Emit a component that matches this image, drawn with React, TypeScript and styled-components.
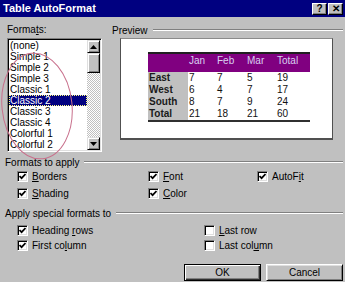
import React from "react";
import styled, { createGlobalStyle } from "styled-components";

const Global = createGlobalStyle`
  html, body { margin: 0; padding: 0; background: #c0c0c0; }
  body {
    font-family: "Liberation Sans", Arial, sans-serif;
    font-size: 10px;
    color: #000;
  }
`;

const Window = styled.div`
  position: relative;
  width: 345px;
  height: 282px;
  overflow: hidden;
  background: #c0c0c0;
  display: flex;
  flex-direction: column;
`;

const TitleBar = styled.div`
  height: 17px;
  flex: none;
  background: #000080;
  display: flex;
  align-items: center;
  justify-content: space-between;
  padding: 0 2px 0 3px;
`;

const Title = styled.span`
  color: #fff;
  font-weight: bold;
  font-size: 11px;
  line-height: 17px;
  white-space: nowrap;
`;

const CaptionButtons = styled.div`
  display: flex;
  gap: 1px;
`;

const CaptionButton = styled.div`
  width: 15px;
  height: 12px;
  box-sizing: border-box;
  background: #c0c0c0;
  border-top: 1px solid #fff;
  border-left: 1px solid #fff;
  border-right: 1px solid #000;
  border-bottom: 1px solid #000;
  box-shadow: inset -1px -1px #808080;
  display: flex;
  align-items: center;
  justify-content: center;
  font-weight: bold;
  font-size: 10px;
  line-height: 1;
`;

const TopSection = styled.div`
  display: grid;
  grid-template-columns: 95px 231px;
  column-gap: 10px;
  margin: 7px 0 0 7px;
`;

const Column = styled.div`
  display: flex;
  flex-direction: column;
`;

const FieldLabel = styled.div`
  height: 12px;
  line-height: 12px;
  white-space: nowrap;
`;

const Key = styled.span`
  text-decoration: underline;
`;

const ListBox = styled.div`
  margin-top: 2px;
  height: 114px;
  box-sizing: border-box;
  border-top: 1px solid #808080;
  border-left: 1px solid #808080;
  border-right: 1px solid #fff;
  border-bottom: 1px solid #fff;
  box-shadow: inset 1px 1px #000, inset -1px -1px #dfdfdf;
  background: #fff;
  padding: 1px;
  display: flex;
`;

const Items = styled.div`
  flex: 1;
  overflow: hidden;
  display: flex;
  flex-direction: column;
`;

const Item = styled.div<{ $selected?: boolean }>`
  height: 11px;
  flex: none;
  line-height: 11px;
  padding-left: 1px;
  white-space: nowrap;
  background: ${(p) => (p.$selected ? "#000080" : "transparent")};
  color: ${(p) => (p.$selected ? "#fff" : "#000")};
  outline: ${(p) => (p.$selected ? "1px dotted #ffff80" : "none")};
  outline-offset: -1px;
`;

const ScrollBar = styled.div`
  width: 13px;
  flex: none;
  display: flex;
  flex-direction: column;
  background: repeating-conic-gradient(#c0c0c0 0% 25%, #fff 0% 50%) 0 0 / 2px 2px;
`;

const ScrollPart = styled.div<{ $h: number }>`
  height: ${(p) => p.$h}px;
  flex: none;
  box-sizing: border-box;
  background: #c0c0c0;
  border-top: 1px solid #dfdfdf;
  border-left: 1px solid #dfdfdf;
  border-right: 1px solid #000;
  border-bottom: 1px solid #000;
  box-shadow: inset 1px 1px #fff, inset -1px -1px #808080;
  display: flex;
  align-items: center;
  justify-content: center;
`;

const Track = styled.div`
  flex: 1;
`;

const PreviewHeader = styled.div`
  display: flex;
  align-items: center;
  gap: 5px;
  height: 12px;
`;

const EtchedLine = styled.div`
  flex: 1;
  height: 0;
  border-top: 1px solid #808080;
  border-bottom: 1px solid #fff;
`;

const PreviewBox = styled.div`
  margin: 2px 0 0 8px;
  width: 213px;
  height: 102px;
  box-sizing: border-box;
  background: #fff;
  border: 1px solid #505050;
  border-top-color: #8a8a8a;
  border-bottom-width: 2px;
  padding: 13px 0 0 27px;
`;

const SampleTable = styled.div`
  width: 162px;
  display: grid;
  grid-template-columns: 40px 28px 30px 30px 34px;
  grid-template-rows: 18px repeat(4, 12px);
  border-top: 2px solid #202020;
  border-bottom: 2px solid #303030;
`;

type CellKind = "head" | "label" | "data";

const Cell = styled.div<{ $kind: CellKind }>`
  line-height: 12px;
  padding: ${(p) => (p.$kind === "head" ? "1px 0 0 1px" : "0 0 0 1px")};
  white-space: nowrap;
  background: ${(p) =>
    p.$kind === "head" ? "#800080" : p.$kind === "label" ? "#c0c0c0" : "#fff"};
  color: ${(p) =>
    p.$kind === "head" ? "#d8d0f0" : p.$kind === "label" ? "#1a1a1a" : "#111"};
  font-weight: ${(p) => (p.$kind === "label" ? "bold" : "normal")};
`;

const GroupHeader = styled.div<{ $top: number }>`
  display: flex;
  align-items: center;
  gap: 5px;
  height: 12px;
  margin-top: ${(p) => p.$top}px;
  padding: 0 2px 0 5px;
  white-space: nowrap;
`;

const CheckGrid = styled.div<{ $cols: string; $row: number; $top: number }>`
  display: grid;
  grid-template-columns: ${(p) => p.$cols};
  grid-auto-rows: ${(p) => p.$row}px;
  margin: ${(p) => p.$top}px 0 0 17px;
`;

const CheckItem = styled.div`
  display: flex;
  align-items: center;
  gap: 4px;
  white-space: nowrap;
`;

const Box = styled.span`
  width: 11px;
  height: 11px;
  box-sizing: border-box;
  flex: none;
  background: #fff;
  border-top: 1px solid #808080;
  border-left: 1px solid #808080;
  border-right: 1px solid #fff;
  border-bottom: 1px solid #fff;
  box-shadow: inset 1px 1px #000, inset -1px -1px #dfdfdf;
  display: flex;
  align-items: center;
  justify-content: center;
`;

const ButtonRow = styled.div`
  display: flex;
  justify-content: flex-end;
  gap: 5px;
  margin-top: 11px;
  padding-right: 2px;
`;

const Button = styled.div<{ $default?: boolean }>`
  width: 77px;
  height: 17px;
  box-sizing: border-box;
  background: #c0c0c0;
  display: flex;
  align-items: center;
  justify-content: center;
  font-size: 10px;
  ${(p) =>
    p.$default
      ? `border: 1px solid #000;
         box-shadow: inset 1px 1px #fff, inset -1px -1px #303030, inset -2px -2px #808080;`
      : `border-top: 1px solid #fff; border-left: 1px solid #fff;
         border-right: 1px solid #000; border-bottom: 1px solid #000;
         box-shadow: inset 1px 1px #dfdfdf, inset -1px -1px #808080;`}
`;

const Annotation = styled.svg`
  position: absolute;
  left: 0;
  top: 0;
  pointer-events: none;
`;

const Check = ({ on }: { on: boolean }) => (
  <Box>
    {on && (
      <svg width="7" height="7" viewBox="0 0 7 7">
        <path d="M0.5 3 L2.6 5.2 L6.5 1" fill="none" stroke="#000" strokeWidth="1.7" />
      </svg>
    )}
  </Box>
);

const Arrow = ({ up }: { up: boolean }) => (
  <svg width="7" height="4" viewBox="0 0 7 4">
    <path d={up ? "M3.5 0 L7 4 L0 4 Z" : "M0 0 L7 0 L3.5 4 Z"} fill="#000" />
  </svg>
);

const formats = [
  "(none)",
  "Simple 1",
  "Simple 2",
  "Simple 3",
  "Classic 1",
  "Classic 2",
  "Classic 3",
  "Classic 4",
  "Colorful 1",
  "Colorful 2",
];

const rows: [string, number[]][] = [
  ["East", [7, 7, 5, 19]],
  ["West", [6, 4, 7, 17]],
  ["South", [8, 7, 9, 24]],
  ["Total", [21, 18, 21, 60]],
];

export default function App() {
  return (
    <>
      <Global />
      <Window>
        <TitleBar>
          <Title>Table AutoFormat</Title>
          <CaptionButtons>
            <CaptionButton>?</CaptionButton>
            <CaptionButton>✕</CaptionButton>
          </CaptionButtons>
        </TitleBar>

        <TopSection>
          <Column>
            <FieldLabel>
              Forma<Key>t</Key>s:
            </FieldLabel>
            <ListBox>
              <Items>
                {formats.map((f) => (
                  <Item key={f} $selected={f === "Classic 2"}>
                    {f}
                  </Item>
                ))}
              </Items>
              <ScrollBar>
                <ScrollPart $h={13}>
                  <Arrow up />
                </ScrollPart>
                <ScrollPart $h={20} />
                <Track />
                <ScrollPart $h={13}>
                  <Arrow up={false} />
                </ScrollPart>
              </ScrollBar>
            </ListBox>
          </Column>
          <Column>
            <PreviewHeader>
              <span>Preview</span>
              <EtchedLine />
            </PreviewHeader>
            <PreviewBox>
              <SampleTable>
                <Cell $kind="head" />
                {["Jan", "Feb", "Mar", "Total"].map((h) => (
                  <Cell key={h} $kind="head">
                    {h}
                  </Cell>
                ))}
                {rows.map(([name, vals]) => (
                  <React.Fragment key={name}>
                    <Cell $kind="label">{name}</Cell>
                    {vals.map((v, i) => (
                      <Cell key={i} $kind="data">
                        {v}
                      </Cell>
                    ))}
                  </React.Fragment>
                ))}
              </SampleTable>
            </PreviewBox>
          </Column>
        </TopSection>

        <GroupHeader $top={4}>
          <span>Formats to apply</span>
          <EtchedLine />
        </GroupHeader>
        <CheckGrid $cols="131px 109px 1fr" $row={17} $top={0}>
          <CheckItem>
            <Check on />
            <span>
              <Key>B</Key>orders
            </span>
          </CheckItem>
          <CheckItem>
            <Check on />
            <span>
              <Key>F</Key>ont
            </span>
          </CheckItem>
          <CheckItem>
            <Check on />
            <span>
              AutoF<Key>i</Key>t
            </span>
          </CheckItem>
          <CheckItem>
            <Check on />
            <span>
              <Key>S</Key>hading
            </span>
          </CheckItem>
          <CheckItem>
            <Check on />
            <span>
              <Key>C</Key>olor
            </span>
          </CheckItem>
        </CheckGrid>

        <GroupHeader $top={5}>
          <span>Apply special formats to</span>
          <EtchedLine />
        </GroupHeader>
        <CheckGrid $cols="187px 1fr" $row={15} $top={4}>
          <CheckItem>
            <Check on />
            <span>
              Heading <Key>r</Key>ows
            </span>
          </CheckItem>
          <CheckItem>
            <Check on={false} />
            <span>
              <Key>L</Key>ast row
            </span>
          </CheckItem>
          <CheckItem>
            <Check on />
            <span>
              First co<Key>l</Key>umn
            </span>
          </CheckItem>
          <CheckItem>
            <Check on={false} />
            <span>
              Last col<Key>u</Key>mn
            </span>
          </CheckItem>
        </CheckGrid>

        <ButtonRow>
          <Button $default>OK</Button>
          <Button>Cancel</Button>
        </ButtonRow>

        <Annotation width="90" height="170" viewBox="0 0 90 170">
          <ellipse
            cx="37"
            cy="106"
            rx="35"
            ry="53"
            fill="none"
            stroke="#c8708c"
            strokeWidth="1"
            transform="rotate(-6 37 106)"
          />
        </Annotation>
      </Window>
    </>
  );
}
